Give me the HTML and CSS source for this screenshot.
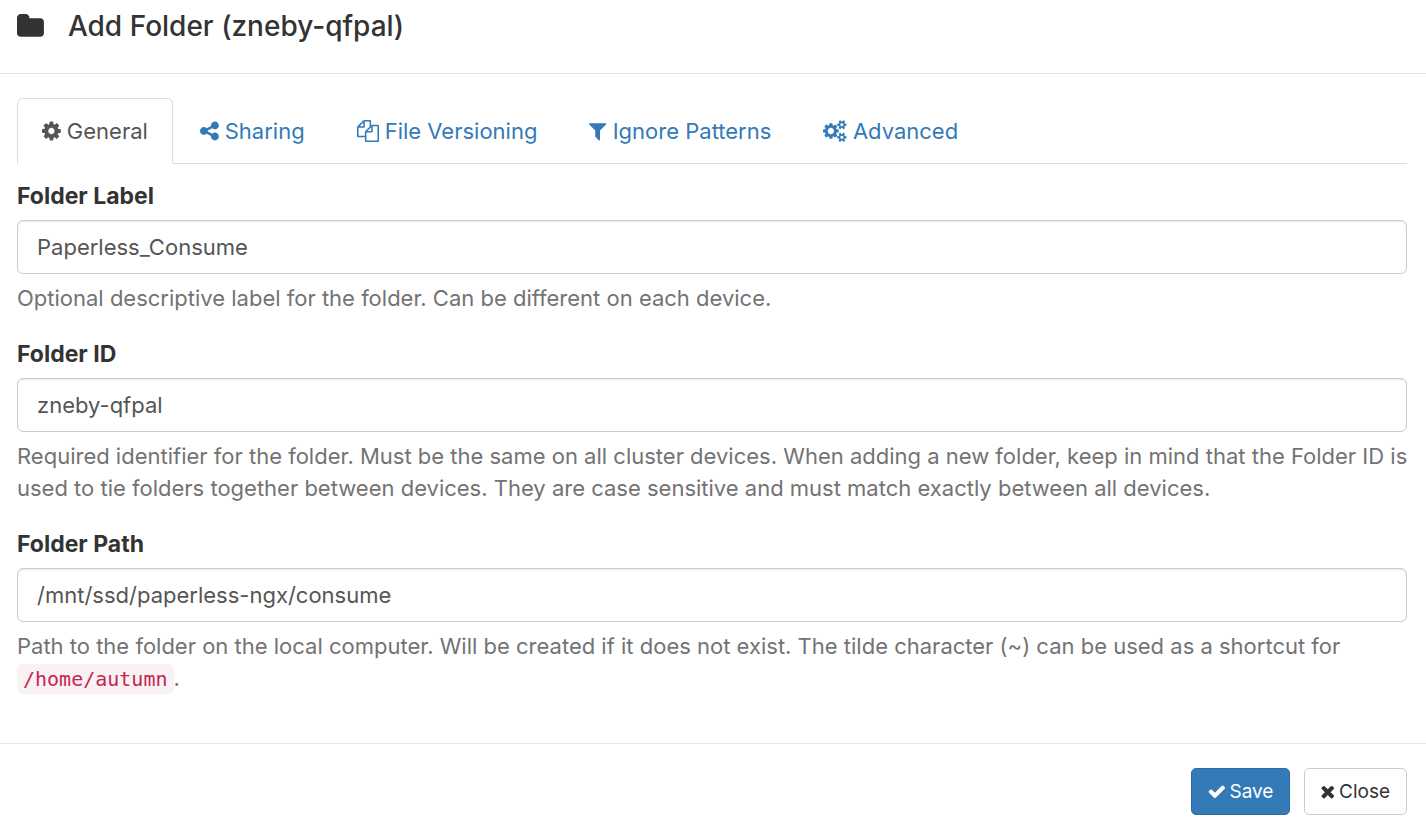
FILE: index.html
```html
<!DOCTYPE html>
<html lang="en">
<head>
    <meta charset="UTF-8">
    <meta name="viewport" content="width=device-width, initial-scale=1.0">
    <title>Add Folder</title>
    <link rel="stylesheet" href="styles.css">
</head>
<body>
    <form class="modal">
        <header class="modal-header">
            <svg class="icon icon-lg" viewBox="64 0 1664 1792" aria-hidden="true"><path d="M1728 608v704q0 92-66 158t-158 66h-1216q-92 0-158-66t-66-158v-960q0-92 66-158t158-66h320q92 0 158 66t66 158v32h672q92 0 158 66t66 158z"/></svg>
            <h1 class="modal-title">Add Folder (zneby-qfpal)</h1>
        </header>

        <div class="modal-body">
            <nav class="tabs">
                <a class="tab active" href="#general">
                    <svg class="icon" viewBox="128 0 1536 1792" aria-hidden="true"><path d="M1152 896q0-106-75-181t-181-75-181 75-75 181 75 181 181 75 181-75 75-181zm512-109v222q0 12-8 23t-20 13l-185 28q-19 54-39 91 35 50 107 138 10 12 10 25t-9 23q-27 37-99 108t-94 71q-12 0-26-9l-138-108q-44 23-91 38-16 136-29 186-7 28-36 28h-222q-14 0-24.5-8.5t-11.5-21.5l-28-184q-49-16-90-37l-141 107q-10 9-25 9-14 0-25-11-126-114-165-168-7-10-7-23 0-12 8-23 15-21 51-66.5t54-70.5q-27-50-41-99l-183-27q-13-2-21-12.5t-8-23.5v-222q0-12 8-23t19-13l186-28q14-46 39-92-40-57-107-138-10-12-10-24 0-10 9-23 26-36 98.5-107.5t94.5-71.5q13 0 26 10l138 107q44-23 91-38 16-136 29-186 7-28 36-28h222q14 0 24.5 8.5t11.5 21.5l28 184q49 16 90 37l142-107q9-9 24-9 13 0 25 10 129 119 165 170 7 8 7 22 0 12-8 23-15 21-51 66.5t-54 70.5q26 50 41 98l183 28q13 2 21 12.5t8 23.5z"/></svg>
                    General
                </a>
                <a class="tab" href="#sharing">
                    <svg class="icon" viewBox="128 0 1536 1792" aria-hidden="true"><path d="M1344 1024q133 0 226.5 93.5t93.5 226.5-93.5 226.5-226.5 93.5-226.5-93.5-93.5-226.5q0-12 2-34l-360-180q-92 86-218 86-133 0-226.5-93.5t-93.5-226.5 93.5-226.5 226.5-93.5q126 0 218 86l360-180q-2-22-2-34 0-133 93.5-226.5t226.5-93.5 226.5 93.5 93.5 226.5-93.5 226.5-226.5 93.5q-126 0-218-86l-360 180q2 22 2 34t-2 34l360 180q92-86 218-86z"/></svg>
                    Sharing
                </a>
                <a class="tab" href="#versioning">
                    <svg class="icon" viewBox="0 0 1792 1792" aria-hidden="true"><path d="M1696 384q40 0 68 28t28 68v1216q0 40-28 68t-68 28h-960q-40 0-68-28t-28-68v-288h-544q-40 0-68-28t-28-68v-672q0-40 20-88t48-76l408-408q28-28 76-48t88-20h416q40 0 68 28t28 68v328q68-40 128-40h416zm-544 213l-299 299h299v-299zm-640-384l-299 299h299v-299zm196 647l316-316v-416h-384v416q0 40-28 68t-68 28h-416v640h512v-256q0-40 20-88t48-76zm956 804v-1152h-384v416q0 40-28 68t-68 28h-416v640h896z"/></svg>
                    File Versioning
                </a>
                <a class="tab" href="#ignore">
                    <svg class="icon" viewBox="192 0 1408 1792" aria-hidden="true"><path d="M1595 295q17 41-14 70l-493 493v742q0 42-39 59-13 5-25 5-27 0-45-19l-256-256q-19-19-19-45v-486l-493-493q-31-29-14-70 17-39 59-39h1280q42 0 59 39z"/></svg>
                    Ignore Patterns
                </a>
                <a class="tab" href="#advanced">
                    <svg class="icon" viewBox="-64 0 1920 1792" aria-hidden="true"><path d="M832 896q0-106-75-181t-181-75-181 75-75 181 75 181 181 75 181-75 75-181zm768 512q0-52-38-90t-90-38-90 38-38 90q0 53 37.5 90.5t90.5 37.5 90.5-37.5 37.5-90.5zm0-1024q0-52-38-90t-90-38-90 38-38 90q0 53 37.5 90.5t90.5 37.5 90.5-37.5 37.5-90.5zm-384 421v185q0 10-7 19.5t-16 10.5l-155 24q-11 35-32 76 34 48 90 115 7 11 7 20 0 12-7 19-23 30-82.5 89.5t-78.5 59.5q-11 0-21-7l-115-90q-37 19-77 31-11 108-23 155-7 24-30 24h-186q-11 0-20-7.5t-10-17.5l-23-153q-34-10-75-31l-118 89q-7 7-20 7-11 0-21-8-144-133-144-160 0-9 7-19 10-14 41-53t47-61q-23-44-35-82l-152-24q-10-1-17-9.5t-7-19.5v-185q0-10 7-19.5t16-10.5l155-24q11-35 32-76-34-48-90-115-7-11-7-20 0-12 7-20 22-30 82-89t79-59q11 0 21 7l115 90q34-18 77-32 11-108 23-154 7-24 30-24h186q11 0 20 7.5t10 17.5l23 153q34 10 75 31l118-89q8-7 20-7 11 0 21 8 144 133 144 160 0 8-7 19-12 16-42 54t-45 60q23 48 34 82l152 23q10 2 17 10.5t7 19.5zm640 533v140q0 16-149 31-12 27-30 52 51 113 51 138 0 4-4 7-122 71-124 71-8 0-46-47t-52-68q-20 2-30 2t-30-2q-14 21-52 68t-46 47q-2 0-124-71-4-3-4-7 0-25 51-138-18-25-30-52-149-15-149-31v-140q0-16 149-31 13-29 30-52-51-113-51-138 0-4 4-7 4-2 35-20t59-34 30-16q8 0 46 46.5t52 67.5q20-2 30-2t30 2q51-71 92-112l6-2q4 0 124 70 4 3 4 7 0 25-51 138 17 23 30 52 149 15 149 31zm0-1024v140q0 16-149 31-12 27-30 52 51 113 51 138 0 4-4 7-122 71-124 71-8 0-46-47t-52-68q-20 2-30 2t-30-2q-14 21-52 68t-46 47q-2 0-124-71-4-3-4-7 0-25 51-138-18-25-30-52-149-15-149-31v-140q0-16 149-31 13-29 30-52-51-113-51-138 0-4 4-7 4-2 35-20t59-34 30-16q8 0 46 46.5t52 67.5q20-2 30-2t30 2q51-71 92-112l6-2q4 0 124 70 4 3 4 7 0 25-51 138 17 23 30 52 149 15 149 31z"/></svg>
                    Advanced
                </a>
            </nav>

            <div class="form-group">
                <label for="folderLabel">Folder Label</label>
                <input class="form-control" type="text" id="folderLabel" value="Paperless_Consume">
                <p class="help-block">Optional descriptive label for the folder. Can be different on each device.</p>
            </div>

            <div class="form-group">
                <label for="folderID">Folder ID</label>
                <input class="form-control" type="text" id="folderID" value="zneby-qfpal">
                <p class="help-block">Required identifier for the folder. Must be the same on all cluster devices. When adding a new folder, keep in mind that the Folder ID is used to tie folders together between devices. They are case sensitive and must match exactly between all devices.</p>
            </div>

            <div class="form-group">
                <label for="folderPath">Folder Path</label>
                <input class="form-control" type="text" id="folderPath" value="/mnt/ssd/paperless-ngx/consume">
                <p class="help-block">Path to the folder on the local computer. Will be created if it does not exist. The tilde character (~) can be used as a shortcut for <code>/home/autumn</code>.</p>
            </div>
        </div>

        <footer class="modal-footer">
            <button type="button" class="btn btn-primary">
                <svg class="icon" viewBox="64 0 1664 1792" aria-hidden="true"><path d="M1671 566q0 40-28 68l-724 724-136 136q-28 28-68 28t-68-28l-136-136-362-362q-28-28-28-68t28-68l136-136q28-28 68-28t68 28l294 295 656-657q28-28 68-28t68 28l136 136q28 28 28 68z"/></svg>
                Save
            </button>
            <button type="button" class="btn btn-default">
                <svg class="icon" viewBox="256 0 1280 1792" aria-hidden="true"><path d="M1490 1322q0 40-28 68l-136 136q-28 28-68 28t-68-28l-294-294-294 294q-28 28-68 28t-68-28l-136-136q-28-28-28-68t28-68l294-294-294-294q-28-28-28-68t28-68l136-136q28-28 68-28t68 28l294 294 294-294q28-28 68-28t68 28l136 136q28 28 28 68t-28 68l-294 294 294 294q28 28 28 68z"/></svg>
                Close
            </button>
        </footer>
    </form>
</body>
</html>
```
FILE: styles.css
```css
* {
    box-sizing: border-box;
}
body {
    margin: 0;
    font-family: Inter, "Liberation Sans", sans-serif;
    font-size: 22px;
    line-height: 32px;
    color: #333;
    background-color: #fff;
}
.icon {
    height: 22px;
    width: auto;
    fill: currentColor;
    flex: none;
}
.icon-lg {
    height: 29px;
}
.modal-header {
    display: flex;
    align-items: center;
    gap: 24px;
    padding: 6px 17px 27px;
    border-bottom: 1px solid #e5e5e5;
}
.modal-title {
    margin: 0;
    font-size: 28px;
    font-weight: 500;
    line-height: 40px;
}
.modal-body {
    padding: 24px 19px 25px 17px;
}
.tabs {
    display: flex;
    gap: 2px;
    margin-bottom: 16px;
    border-bottom: 1px solid #ddd;
}
.tab {
    display: flex;
    align-items: center;
    gap: 6px;
    margin-bottom: -1px;
    padding: 16px 24px;
    border: 1px solid transparent;
    border-radius: 6px 6px 0 0;
    color: #337ab7;
    text-decoration: none;
}
.tab.active {
    color: #555;
    background-color: #fff;
    border-color: #ddd #ddd #fff;
}
.form-group {
    margin-bottom: 24px;
}
.form-group label {
    display: block;
    margin-bottom: 8px;
    font-size: 23px;
    font-weight: 700;
}
.form-control {
    display: block;
    width: 100%;
    height: 54px;
    padding: 10px 19px;
    border: 1px solid #ccc;
    border-radius: 6px;
    box-shadow: inset 0 1px 2px rgba(0, 0, 0, 0.1);
    font: inherit;
    color: #555;
    background-color: #fff;
}
.help-block {
    margin: 8px -8px 0 0;
    color: #737373;
}
code {
    padding: 3px 6px;
    border-radius: 6px;
    font-family: "DejaVu Sans Mono", monospace;
    font-size: 20px;
    line-height: 24px;
    color: #c7254e;
    background-color: #f9f2f4;
}
.modal-footer {
    display: flex;
    justify-content: flex-end;
    gap: 14px;
    padding: 24px 19px 21px;
    border-top: 1px solid #e5e5e5;
}
.btn {
    display: flex;
    align-items: center;
    gap: 4px;
    padding: 8px 16px;
    border: 1px solid;
    border-radius: 5px;
    font-family: inherit;
    font-size: 19px;
    line-height: 29px;
    cursor: pointer;
}
.btn .icon {
    height: 19px;
}
.btn-primary {
    color: #fff;
    background-color: #337ab7;
    border-color: #2e6da4;
}
.btn-default {
    color: #333;
    background-color: #fff;
    border-color: #ccc;
}
```
